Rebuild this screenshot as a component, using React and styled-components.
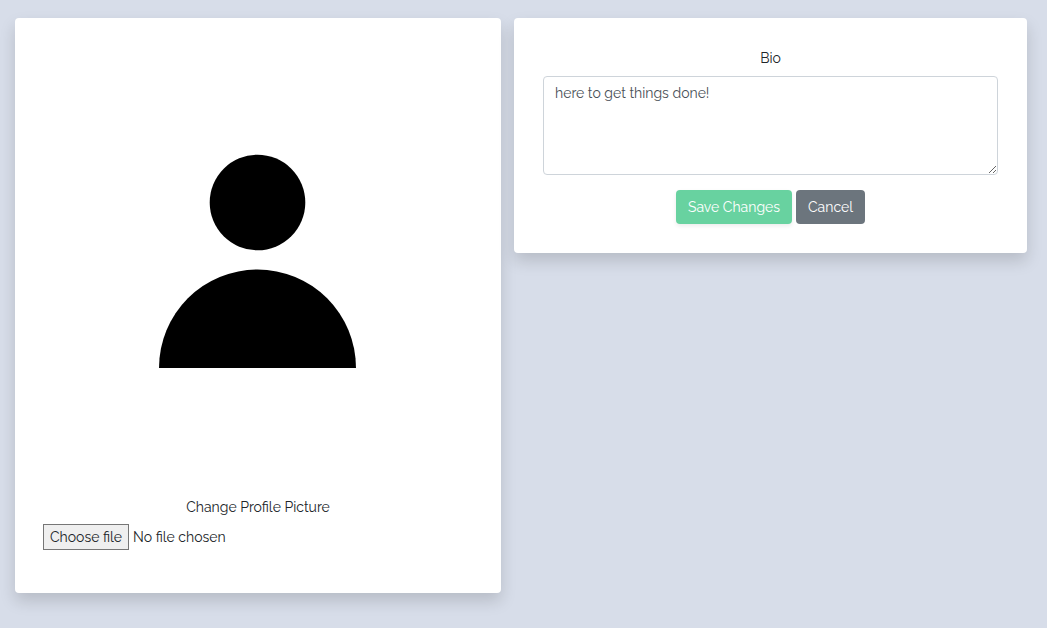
import React, { useState } from 'react';
import styled, { createGlobalStyle } from 'styled-components';

const GlobalStyle = createGlobalStyle`
  *, *::before, *::after { box-sizing: border-box; }
  body {
    margin: 0;
    background: #d7dde9;
    color: #212529;
    font-family: Raleway, Lato, "Liberation Sans", sans-serif;
    font-size: 14px;
    font-weight: 400;
    line-height: 22px;
  }
`;

const Page = styled.main`
  display: grid;
  grid-template-columns: 18fr 19fr;
  align-items: start;
  gap: 13px;
  padding: 18px 20px 35px 15px;
`;

const Card = styled.section`
  display: flex;
  flex-direction: column;
  min-width: 0;
  padding: 29px ${({ $inset }) => $inset}px;
  background: #fff;
  border-radius: 4px;
  box-shadow: 0 8px 16px rgba(0, 0, 0, 0.15);
`;

const Avatar = styled.svg`
  display: block;
  width: 100%;
  height: auto;
  margin-bottom: 19px;
`;

const Label = styled.label`
  margin-bottom: ${({ $gap }) => $gap}px;
  text-align: center;
`;

const FilePicker = styled.div`
  position: relative;
  display: flex;
  align-items: center;
  gap: 4px;
  margin-bottom: 14px;
`;

const FileInput = styled.input`
  position: absolute;
  inset: 0;
  width: 100%;
  opacity: 0;
`;

const FileButton = styled.span`
  height: 26px;
  padding: 1px 6px;
  border: 1px solid #767676;
  background: #efefef;
`;

const BioInput = styled.textarea`
  display: block;
  width: 100%;
  height: 99px;
  margin-bottom: 15px;
  padding: 5px 11px;
  border: 1px solid #ced4da;
  border-radius: 4px;
  background: #fff;
  color: #495057;
  font: inherit;
  resize: vertical;
`;

const Actions = styled.div`
  display: flex;
  justify-content: center;
  gap: 4px;
`;

const Button = styled.button`
  height: 34px;
  padding: 5px 12px;
  border: 0;
  border-radius: 4px;
  background: ${({ $primary }) => ($primary ? '#68d2a0' : '#6c757d')};
  box-shadow: ${({ $primary }) => ($primary ? '0 2px 4px rgba(0, 0, 0, 0.08)' : 'none')};
  color: #fff;
  font: inherit;
`;

export default function App() {
  const [fileName, setFileName] = useState('No file chosen');

  return (
    <>
      <GlobalStyle />
      <Page>
        <Card $inset={28}>
          <Avatar viewBox="0 0 430 430" role="img" aria-label="Profile picture">
            <circle cx="214.5" cy="155.5" r="47.8" />
            <path d="M116 321a98.5 98.5 0 0 1 197 0z" />
          </Avatar>
          <Label htmlFor="picture" $gap={6}>Change Profile Picture</Label>
          <FilePicker>
            <FileButton>Choose file</FileButton>
            <span>{fileName}</span>
            <FileInput
              id="picture"
              type="file"
              onChange={(e) => setFileName(e.target.files[0]?.name ?? 'No file chosen')}
            />
          </FilePicker>
        </Card>
        <Card $inset={29}>
          <Label htmlFor="bio" $gap={7}>Bio</Label>
          <BioInput id="bio" defaultValue="here to get things done!" />
          <Actions>
            <Button type="button" $primary>Save Changes</Button>
            <Button type="button">Cancel</Button>
          </Actions>
        </Card>
      </Page>
    </>
  );
}
